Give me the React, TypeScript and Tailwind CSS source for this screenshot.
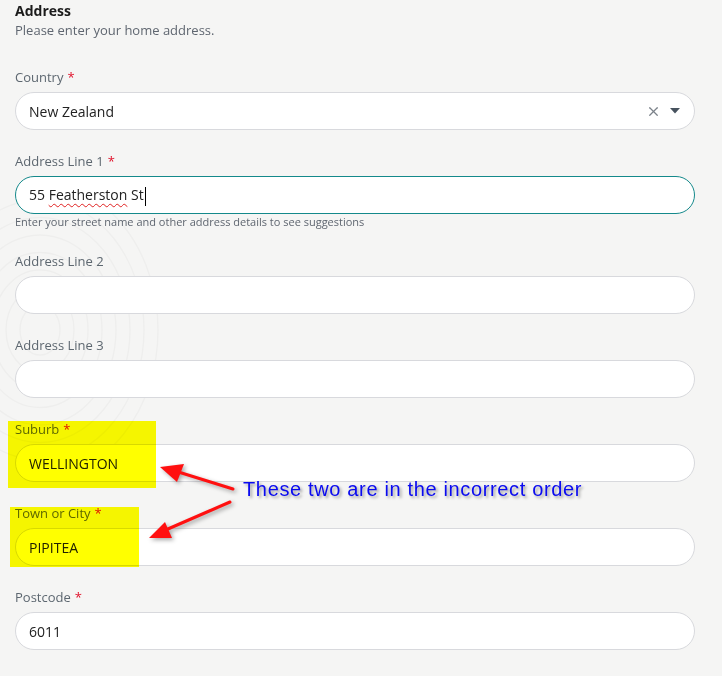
import React from 'react';
import { X } from 'lucide-react';

interface FieldProps {
  label: string;
  required?: boolean;
  children?: React.ReactNode;
  focused?: boolean;
  className?: string;
  right?: React.ReactNode;
}

const Field: React.FC<FieldProps> = ({ label, required, children, focused, className = '', right }) => (
  <div className={className}>
    <div className="h-[18px] text-[13px] leading-[18px] text-[#5d6770]">
      {label}
      {required && <span className="ml-[4px] text-[#e0102a]">*</span>}
    </div>
    <div
      className={
        'mt-[6px] flex h-[38px] items-center rounded-full border bg-white pl-[13px] pr-[14px] text-[14px] text-[#222] ' +
        (focused ? 'border-[#14898b]' : 'border-[#d8d9dd]')
      }
    >
      <div className="flex-1 whitespace-nowrap">{children}</div>
      {right}
    </div>
  </div>
);

export default function App() {
  return (
    <div
      className="relative h-[676px] w-[722px] overflow-hidden bg-[#f5f5f4]"
      style={{ fontFamily: '"Open Sans", "Noto Sans", sans-serif' }}
    >
      {/* faint fingerprint pattern on the left */}
      <svg className="absolute left-0 top-[200px] h-[260px] w-[220px] opacity-[0.025]" viewBox="0 0 220 260" fill="none" stroke="#000">
        {[20, 34, 48, 62, 76, 90, 104, 118].map((r) => (
          <ellipse key={r} cx="40" cy="130" rx={r} ry={r * 1.25} strokeWidth="1.5" />
        ))}
      </svg>

      <div className="relative ml-[15px] w-[680px] pt-px">
        <div className="text-[14px] font-bold leading-[20px] text-[#1b1b1b]">Address</div>
        <div className="text-[13px] leading-[18px] text-[#5f6670]">Please enter your home address.</div>

        <Field
          label="Country"
          required
          className="mt-[29px]"
          right={
            <div className="flex items-center gap-[9px]">
              <X size={15} strokeWidth={2} className="text-[#7b828a]" />
              <svg width="10" height="6" viewBox="0 0 10 6">
                <path d="M0 0h10L5 5.5z" fill="#46525e" />
              </svg>
            </div>
          }
        >
          New Zealand
        </Field>

        <Field label="Address Line 1" required focused className="mt-[22px]">
          55{' '}
          <span className="underline decoration-wavy decoration-[#e02020] decoration-[1px] underline-offset-[3px]">
            Featherston
          </span>{' '}
          St
          <span className="ml-px inline-block h-[19px] w-px bg-black align-middle" />
        </Field>
        <div className="text-[11px] leading-[16px] text-[#5f6670]">
          Enter your street name and other address details to see suggestions
        </div>

        <Field label="Address Line 2" className="mt-[22px]" />
        <Field label="Address Line 3" className="mt-[22px]" />
        <Field label="Suburb" required className="mt-[22px]">
          WELLINGTON
        </Field>
        <Field label="Town or City" required className="mt-[22px]">
          PIPITEA
        </Field>
        <Field label="Postcode" required className="mt-[22px]">
          6011
        </Field>
      </div>

      {/* annotation: highlights */}
      <div className="absolute left-[8px] top-[421px] h-[67px] w-[148px] bg-[#ffff00] mix-blend-multiply" />
      <div className="absolute left-[10px] top-[507px] h-[60px] w-[129px] bg-[#ffff00] mix-blend-multiply" />

      {/* annotation: arrows */}
      <svg
        className="absolute left-0 top-0 h-[676px] w-[722px]"
        viewBox="0 0 722 676"
        style={{ filter: 'drop-shadow(2px 2px 2px rgba(0,0,0,0.35))' }}
      >
        <line x1="233" y1="489" x2="172" y2="470" stroke="#ff1010" strokeWidth="3" strokeLinecap="round" />
        <path d="M160 467 L184 464 L177 482 Z" fill="#ff1010" />
        <line x1="230" y1="502" x2="161" y2="532" stroke="#ff1010" strokeWidth="3" strokeLinecap="round" />
        <path d="M149 538 L165 522 L172 538 Z" fill="#ff1010" />
      </svg>

      {/* annotation: note */}
      <div
        className="absolute left-[243px] top-[479px] whitespace-nowrap text-[20px] leading-[20px] tracking-[0.65px] text-[#0a0af0]"
        style={{ fontFamily: '"Liberation Sans", Arial, sans-serif', textShadow: '2px 2px 3px rgba(0,0,0,0.35)' }}
      >
        These two are in the incorrect order
      </div>
    </div>
  );
}
